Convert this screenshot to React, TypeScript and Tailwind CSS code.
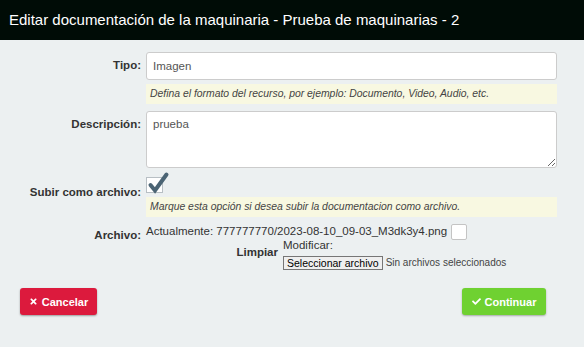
import React from 'react';
import { FaTimes, FaCheck } from 'react-icons/fa';

const font = { fontFamily: '"Liberation Sans", Arial, sans-serif' };

const Hint: React.FC<{ children: React.ReactNode }> = ({ children }) => (
  <div className="mt-[4px] h-[20px] bg-[#f8f8e1] pl-[4px] text-[10.4px] italic leading-[20px] text-[#444]">
    {children}
  </div>
);

const App: React.FC = () => {
  return (
    <div className="flex h-[347px] w-[584px] flex-col bg-[#ecf0f1]" style={font}>
      {/* Header */}
      <header className="flex h-[40px] items-center bg-[#000c06] pl-[9px]">
        <h1 className="text-[15px] text-white">Editar documentación de la maquinaria - Prueba de maquinarias - 2</h1>
      </header>

      {/* Tipo */}
      <div className="mt-[12px] flex">
        <label className="w-[141px] pt-[5px] text-right text-[11.5px] font-bold text-[#333]">Tipo:</label>
        <div className="ml-[5px] w-[411px]">
          <input
            readOnly
            value="Imagen"
            className="h-[28px] w-full rounded-[3px] border border-[#ccc] bg-white px-[6px] text-[11.5px] text-[#555] outline-none"
          />
          <Hint>Defina el formato del recurso, por ejemplo: Documento, Video, Audio, etc.</Hint>
        </div>
      </div>

      {/* Descripcion */}
      <div className="mt-[7px] flex">
        <label className="w-[141px] pt-[5px] text-right text-[11.5px] font-bold text-[#333]">Descripción:</label>
        <div className="ml-[5px] w-[411px]">
          <textarea
            readOnly
            value="prueba"
            className="block h-[57px] w-full rounded-[3px] border border-[#ccc] bg-white px-[6px] py-[4px] text-[11.5px] text-[#555] outline-none"
          />
        </div>
      </div>

      {/* Subir como archivo */}
      <div className="mt-[9px] flex">
        <label className="w-[141px] pt-[7px] text-right text-[11.5px] font-bold text-[#333]">Subir como archivo:</label>
        <div className="ml-[5px] w-[411px]">
          <div className="relative h-[16px] w-[17px] border border-[#b8bfc4] bg-white">
            <svg className="absolute left-[1px] top-[-5px] overflow-visible" width="20" height="20" viewBox="0 0 20 20">
              <path d="M2.5 12 L7 17.5 L18.5 1.5" fill="none" stroke="#4b6474" strokeWidth="4" strokeLinecap="round" strokeLinejoin="miter" />
            </svg>
          </div>
          <Hint>Marque esta opción si desea subir la documentacion como archivo.</Hint>
        </div>
      </div>

      {/* Archivo */}
      <div className="mt-[6px] flex">
        <label className="w-[141px] pt-[4px] text-right text-[11.5px] font-bold text-[#333]">Archivo:</label>
        <div className="ml-[5px] w-[411px] text-[11.5px] text-[#333]">
          <div className="flex items-center">
            <span>Actualmente: 777777770/2023-08-10_09-03_M3dk3y4.png</span>
            <span className="ml-[4px] h-[16px] w-[16px] rounded-[2px] border border-[#c4c4c4] bg-white" />
          </div>
          <div className="flex">
            <span className="w-[132px] pt-[4px] text-right font-bold">Limpiar</span>
            <div className="ml-[5px]">
              <div className="-mt-[2px] leading-[14px]">Modificar:</div>
              <div className="mt-[3px] flex items-center">
                <span className="border border-[#767676] bg-[#efefef] px-[3px] text-[10.5px] leading-[12px] text-black">Seleccionar archivo</span>
                <span className="ml-[3px] text-[10px] text-[#444]">Sin archivos seleccionados</span>
              </div>
            </div>
          </div>
        </div>
      </div>

      {/* Buttons */}
      <div className="ml-[20px] mr-[38px] mt-[18px] flex justify-between">
        <button className="flex h-[27px] w-[77px] items-center justify-center gap-[4px] rounded-[3px] bg-[#dc1a3d] text-[11px] font-bold text-white shadow-[0_1px_2px_rgba(0,0,0,0.35)]">
          <FaTimes className="h-[9px] w-[9px]" />
          Cancelar
        </button>
        <button className="flex h-[27px] w-[84px] items-center justify-center gap-[4px] rounded-[3px] bg-[#6fd131] text-[11px] font-bold text-white shadow-[0_1px_2px_rgba(0,0,0,0.3)]">
          <FaCheck className="h-[9px] w-[9px]" />
          Continuar
        </button>
      </div>
    </div>
  );
};

export default App;
